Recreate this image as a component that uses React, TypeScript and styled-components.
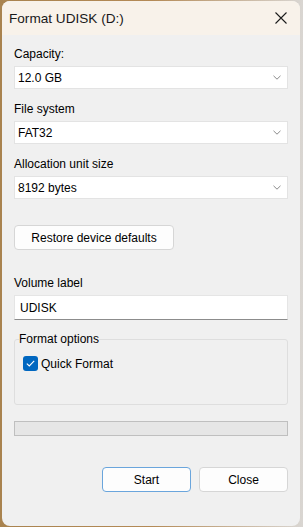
import React from "react";
import styled, { createGlobalStyle } from "styled-components";

const GlobalStyle = createGlobalStyle`
  html, body {
    margin: 0;
    padding: 0;
    background: linear-gradient(to right, #a9834f 0%, #b48a56 50%, #d9d6d2 100%);
    font-family: "Segoe UI", "Liberation Sans", Arial, sans-serif;
  }
  * {
    box-sizing: border-box;
  }
`;

const Window = styled.div`
  margin: 1px 0 0 2px;
  width: 298px;
  height: 525px;
  border-radius: 8px;
  overflow: hidden;
  background: #f0f0f0;
  display: flex;
  flex-direction: column;
  color: #000;
`;

const TitleBar = styled.div`
  height: 34px;
  background: #f8f2ea;
  display: flex;
  align-items: center;
  justify-content: space-between;
  padding: 0 13px 0 7px;
`;

const Title = styled.div`
  font-size: 13.6px;
  color: #1a1a1a;
`;

const Body = styled.div`
  flex: 1;
  display: flex;
  flex-direction: column;
  padding: 11px 12px 0 12px;
`;

const Label = styled.div<{ $top?: number }>`
  font-size: 12px;
  line-height: 16px;
  margin-top: ${(p) => p.$top ?? 0}px;
  margin-bottom: 4px;
`;

const Combo = styled.div`
  height: 23px;
  background: #fff;
  border: 1px solid #e3e3e3;
  display: flex;
  align-items: center;
  justify-content: space-between;
  padding: 0 6px 0 3px;
  font-size: 12px;
`;

const Button = styled.div<{ $primary?: boolean; $width: number }>`
  width: ${(p) => p.$width}px;
  height: 25px;
  background: #fdfdfd;
  border: 1px solid ${(p) => (p.$primary ? "#6aa5dc" : "#d6d6d6")};
  border-radius: 4px;
  display: flex;
  align-items: center;
  justify-content: center;
  font-size: 12px;
`;

const TextBox = styled.div`
  height: 25px;
  background: #fff;
  border: 1px solid #e5e5e5;
  border-bottom: 1px solid #8c8c8c;
  display: flex;
  align-items: center;
  padding: 0 5px;
  font-size: 12px;
`;

const Group = styled.fieldset`
  margin: 11px 0 0 0;
  height: 74px;
  border: 1px solid #dedede;
  border-radius: 3px;
  padding: 9px 8px 4px;
`;

const Legend = styled.legend`
  font-size: 12px;
  padding: 0;
  margin-left: -4px;
  line-height: 16px;
`;

const CheckRow = styled.div`
  display: flex;
  align-items: center;
  gap: 3px;
  font-size: 12px;
`;

const Check = styled.div`
  width: 15px;
  height: 15px;
  border-radius: 3px;
  background: #0067c0;
  display: flex;
  align-items: center;
  justify-content: center;
`;

const Progress = styled.div`
  margin-top: 16px;
  height: 15px;
  background: #e6e6e6;
  border: 1px solid #bfbfbf;
`;

const Footer = styled.div`
  margin-top: 31px;
  display: flex;
  justify-content: flex-end;
  gap: 8px;
`;

const Chevron = () => (
  <svg width="8" height="5" viewBox="0 0 8 5">
    <path d="M0.5 0.8 L4 4.2 L7.5 0.8" fill="none" stroke="#8a8a8a" strokeWidth="1" />
  </svg>
);

const CloseIcon = () => (
  <svg width="12" height="12" viewBox="0 0 12 12">
    <path d="M0.5 0.5 L11.5 11.5 M11.5 0.5 L0.5 11.5" stroke="#1c1c1c" strokeWidth="1.1" />
  </svg>
);

const Field = ({ label, value, top }: { label: string; value: string; top?: number }) => (
  <>
    <Label $top={top}>{label}</Label>
    <Combo>
      <span>{value}</span>
      <Chevron />
    </Combo>
  </>
);

export default function App() {
  return (
    <>
      <GlobalStyle />
      <Window>
        <TitleBar>
          <Title>Format UDISK (D:)</Title>
          <CloseIcon />
        </TitleBar>
        <Body>
          <Field label="Capacity:" value="12.0 GB" />
          <Field label="File system" value="FAT32" top={12} />
          <Field label="Allocation unit size" value="8192 bytes" top={12} />
          <div style={{ marginTop: 26 }}>
            <Button $width={160}>Restore device defaults</Button>
          </div>
          <Label $top={25}>Volume label</Label>
          <TextBox>UDISK</TextBox>
          <Group>
            <Legend>Format options</Legend>
            <CheckRow>
              <Check>
                <svg width="9" height="7" viewBox="0 0 9 7">
                  <path d="M0.8 3.6 L3.3 6 L8.2 0.9" fill="none" stroke="#fff" strokeWidth="1.1" />
                </svg>
              </Check>
              Quick Format
            </CheckRow>
          </Group>
          <Progress />
          <Footer>
            <Button $primary $width={89}>Start</Button>
            <Button $width={89}>Close</Button>
          </Footer>
        </Body>
      </Window>
    </>
  );
}
